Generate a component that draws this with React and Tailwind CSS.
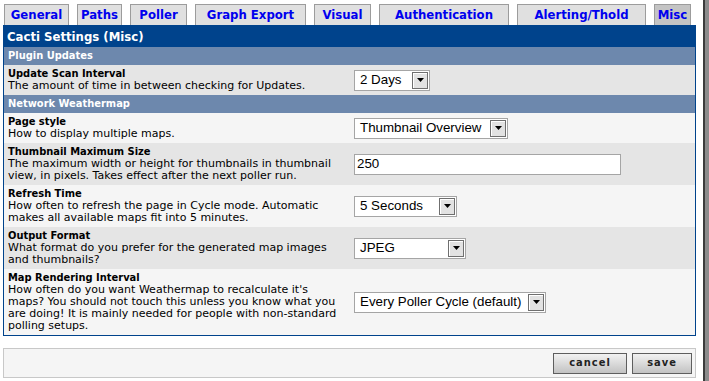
import React from "react";

const tabs = [
  { label: "General", w: "w-[65px]" },
  { label: "Paths", w: "w-[45px]" },
  { label: "Poller", w: "w-[57px]" },
  { label: "Graph Export", w: "w-[111px]" },
  { label: "Visual", w: "w-[57px]" },
  { label: "Authentication", w: "w-[130px]" },
  { label: "Alerting/Thold", w: "w-[129px]" },
  { label: "Misc", w: "w-[37px]", active: true },
];

function Arrow() {
  return (
    <div className="flex items-center justify-center w-[16px] h-[17px] border border-[#6f6f6f] bg-[#e2e2e2] shadow-[inset_1px_1px_0_#ffffff]">
      <svg width="7" height="4" viewBox="0 0 7 4">
        <polygon points="0,0 7,0 3.5,4" fill="#000" />
      </svg>
    </div>
  );
}

function Select({ value, w }) {
  return (
    <div className={"flex items-center justify-between h-[21px] border border-[#a5a5a5] bg-white pl-[5px] pr-[1px] " + w}>
      <span className="font-['Liberation_Sans',Arial,sans-serif] text-[13.33px] text-black leading-none">{value}</span>
      <Arrow />
    </div>
  );
}

function SubHeader({ children }) {
  return (
    <div className="h-[18px] bg-[#6d88ad] text-white font-bold text-[11px] leading-[18px] pl-[4px]">
      {children}
    </div>
  );
}

// desc lines are split the way the original page wraps them
function Row({ title, desc, bg, h, children }) {
  return (
    <div className={"flex " + bg + " " + h}>
      <div className="w-[347px] pl-[4px] pt-[3px] text-[11px] leading-[12px] text-black whitespace-nowrap">
        <div className="font-bold">{title}</div>
        {desc.map((line) => (
          <div key={line} className="font-['DejaVu_Sans',sans-serif]">{line}</div>
        ))}
      </div>
      <div className="flex-1 flex items-center pl-[3px]">{children}</div>
    </div>
  );
}

export default function App() {
  return (
    <div className="flex w-[709px] h-[381px] bg-white overflow-hidden font-['DejaVu_Sans_Condensed','DejaVu_Sans',sans-serif]">
      <div className="w-[703px] pl-[3px] pr-[7px]">
        <div className="flex items-end gap-2 h-[25px] pl-[1px]">
          {tabs.map((t) => (
            <div
              key={t.label}
              className={
                "h-[21px] border border-b-0 border-[#9c9c9c] flex items-center justify-center text-[13px] font-bold text-[#0000ee] " +
                t.w +
                (t.active ? " bg-[#c4c4c4]" : " bg-[#e0e0e0]")
              }
            >
              {t.label}
            </div>
          ))}
        </div>

        <div className="border border-[#00438c]">
          <div className="h-[21px] bg-[#00438c] text-white font-bold text-[13px] leading-[21px] pl-[3px]">
            Cacti Settings (Misc)
          </div>
          <SubHeader>Plugin Updates</SubHeader>
          <Row
            title="Update Scan Interval"
            desc={["The amount of time in between checking for Updates."]}
            bg="bg-[#e5e5e5]"
            h="h-[30px]"
          >
            <Select value="2 Days" w="w-[76px]" />
          </Row>
          <SubHeader>Network Weathermap</SubHeader>
          <Row title="Page style" desc={["How to display multiple maps."]} bg="bg-[#f5f5f5]" h="h-[30px]">
            <Select value="Thumbnail Overview" w="w-[154px]" />
          </Row>
          <Row
            title="Thumbnail Maximum Size"
            desc={[
              "The maximum width or height for thumbnails in thumbnail",
              "view, in pixels. Takes effect after the next poller run.",
            ]}
            bg="bg-[#e5e5e5]"
            h="h-[42px]"
          >
            <div className="w-[267px] h-[21px] border border-[#a5a5a5] bg-white pl-[2px] flex items-center font-['Liberation_Sans',Arial,sans-serif] text-[13.33px] text-black">
              250
            </div>
          </Row>
          <Row
            title="Refresh Time"
            desc={[
              "How often to refresh the page in Cycle mode. Automatic",
              "makes all available maps fit into 5 minutes.",
            ]}
            bg="bg-[#f5f5f5]"
            h="h-[42px]"
          >
            <Select value="5 Seconds" w="w-[103px]" />
          </Row>
          <Row
            title="Output Format"
            desc={["What format do you prefer for the generated map images", "and thumbnails?"]}
            bg="bg-[#e5e5e5]"
            h="h-[42px]"
          >
            <Select value="JPEG" w="w-[112px]" />
          </Row>
          <Row
            title="Map Rendering Interval"
            desc={[
              "How often do you want Weathermap to recalculate it's",
              "maps? You should not touch this unless you know what you",
              "are doing! It is mainly needed for people with non-standard",
              "polling setups.",
            ]}
            bg="bg-[#f5f5f5]"
            h="h-[66px]"
          >
            <Select value="Every Poller Cycle (default)" w="w-[192px]" />
          </Row>
        </div>

        <div className="mt-[12px] h-[30px] border border-[#c8c8c8] bg-[#f5f5f5] flex items-center justify-end gap-[5px] pr-[3px]">
          <button className="w-[74px] h-[21px] border border-[#5e5e5e] bg-gradient-to-b from-[#f2f2f2] to-[#c2c2c2] text-[11px] font-bold tracking-[1px] text-[#222]">
            cancel
          </button>
          <button className="w-[60px] h-[21px] border border-[#5e5e5e] bg-gradient-to-b from-[#f2f2f2] to-[#c2c2c2] text-[11px] font-bold tracking-[1px] text-[#222]">
            save
          </button>
        </div>
      </div>
      <div className="w-[6px] h-full flex">
        <div className="w-[2px] bg-[#3c3c3c]" />
        <div className="w-[4px] bg-[#8c8c8c]" />
      </div>
    </div>
  );
}
